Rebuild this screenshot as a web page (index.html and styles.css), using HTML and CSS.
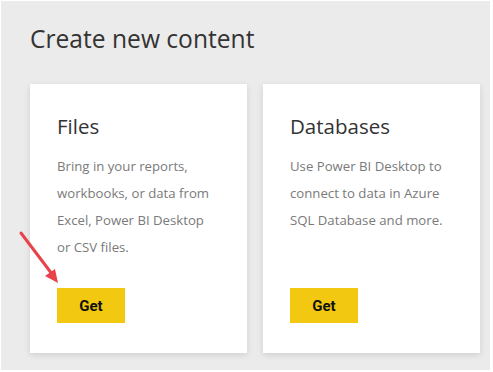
FILE: index.html
```html
<!DOCTYPE html>
<html lang="en">
<head>
  <meta charset="UTF-8" />
  <title>Create new content</title>
  <link rel="stylesheet" href="styles.css">
</head>
<body>

<div class="panel">
  <h1>Create new content</h1>

  <div class="cards">
    <!-- Files -->
    <div class="card">
      <h2>Files</h2>
      <p>Bring in your reports, workbooks, or data from Excel, Power BI Desktop or CSV files.</p>
      <button class="get-btn">Get</button>
    </div>

    <!-- Databases -->
    <div class="card">
      <h2>Databases</h2>
      <p>Use Power BI Desktop to connect to data in Azure SQL Database and more.</p>
      <button class="get-btn">Get</button>
    </div>
  </div>

  <!-- annotation arrow -->
  <svg class="arrow" width="50" height="62" viewBox="0 0 50 62">
    <line x1="5" y1="5" x2="36" y2="46" stroke="#e8434b" stroke-width="3" stroke-linecap="round" />
    <polygon points="42,55 29,48 39,41" fill="#e8434b" />
  </svg>
</div>

</body>
</html>
```

FILE: styles.css
```css
* { margin: 0; padding: 0; box-sizing: border-box; }

body {
  font-family: 'Open Sans', sans-serif;
  background: #ffffff;
}

.panel {
  position: relative;
  width: 489px;
  height: 369px;
  margin: 1px 0 0 1px;
  background: #ebebeb;
  padding: 22px 0 0 29px;
}

h1 {
  font-size: 24.6px;
  font-weight: 400;
  color: #333;
  line-height: 32px;
}

.cards {
  display: flex;
  gap: 16px;
  margin-top: 29px;
}

.card {
  width: 217px;
  height: 269px;
  background: white;
  padding: 26px 32px 30px 27px;
  display: flex;
  flex-direction: column;
  align-items: flex-start;
  box-shadow: 0 2px 6px rgba(0, 0, 0, 0.12);
}

.card h2 {
  font-size: 20.5px;
  font-weight: 400;
  color: #333;
  line-height: 32px;
}

.card p {
  margin-top: 11px;
  font-size: 13.2px;
  line-height: 27px;
  color: #7a7a7a;
}

.get-btn {
  margin-top: auto;
  width: 68px;
  height: 35px;
  border: none;
  background: #f2c811;
  color: #111;
  font-family: Roboto, sans-serif;
  font-weight: 700;
  font-size: 15px;
  cursor: pointer;
}

.arrow {
  position: absolute;
  left: 15px;
  top: 227px;
}
```
